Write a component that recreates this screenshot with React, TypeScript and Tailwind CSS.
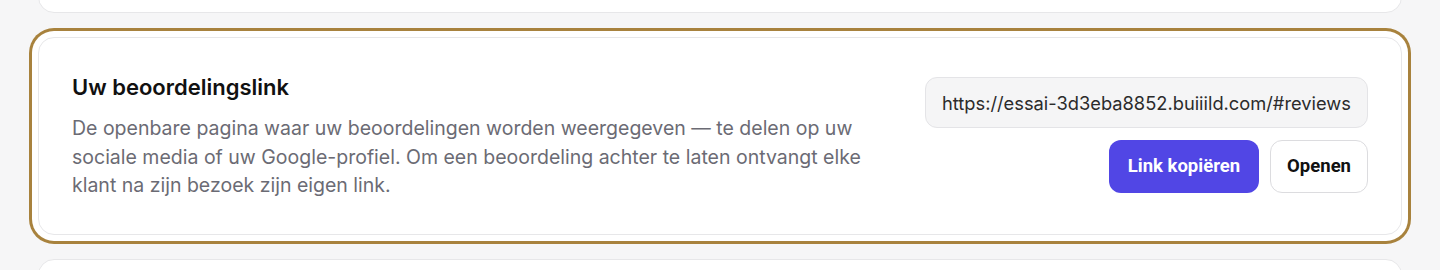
import { useState } from "react";

const Card = ({ children, className = "" }: { children?: React.ReactNode; className?: string }) => (
  <div className={"bg-white border border-[#e7e7e9] rounded-2xl " + className}>{children}</div>
);

const App = () => {
  const [copied, setCopied] = useState(false);
  const url = "https://essai-3d3eba8852.buiiild.com/#reviews";

  return (
    <div className="h-screen bg-[#f6f6f7] px-[38px] font-['Inter',sans-serif] overflow-hidden">
      <div className="flex flex-col gap-6">
        {/* previous card, only its bottom is visible */}
        <Card className="h-[60px] -mt-[47px]" />

        <Card className="ring-3 ring-[#a8823d] ring-offset-[6px] ring-offset-white">
          <div className="flex items-start justify-between gap-[30px] py-[34px] pl-[33px] pr-[33px]">
            <div className="flex-1">
              <h2 className="text-[22px] font-semibold text-[#111111] leading-[30px]">Uw beoordelingslink</h2>
              <p className="mt-3 text-[19.5px] leading-[28.5px] text-[#6b6b74]">
                De openbare pagina waar uw beoordelingen worden weergegeven — te delen op uw sociale media of uw
                Google-profiel. Om een beoordeling achter te laten ontvangt elke klant na zijn bezoek zijn eigen link.
              </p>
            </div>
            <div className="flex flex-col items-end gap-3 w-[443px] shrink-0 pt-[5px]">
              <input
                readOnly
                value={url}
                className="w-full h-[51px] rounded-xl bg-[#f5f5f6] border border-[#e4e4e7] px-4 text-[18.3px] text-[#2b2b2b] outline-none"
              />
              <div className="flex gap-[11px]">
                <button
                  onClick={() => setCopied(true)}
                  className="h-[53px] px-[19px] rounded-xl bg-[#5146e5] text-white text-[18.5px] font-bold font-['Roboto',sans-serif]"
                >
                  {copied ? "Gekopieerd" : "Link kopiëren"}
                </button>
                <a
                  href={url}
                  className="h-[53px] px-[16px] rounded-xl bg-white border border-[#dcdcdf] text-[18.5px] font-bold text-[#111111] font-['Roboto',sans-serif] flex items-center"
                >
                  Openen
                </a>
              </div>
            </div>
          </div>
        </Card>

        <Card className="h-[60px]" />
      </div>
    </div>
  );
};

export default App;
